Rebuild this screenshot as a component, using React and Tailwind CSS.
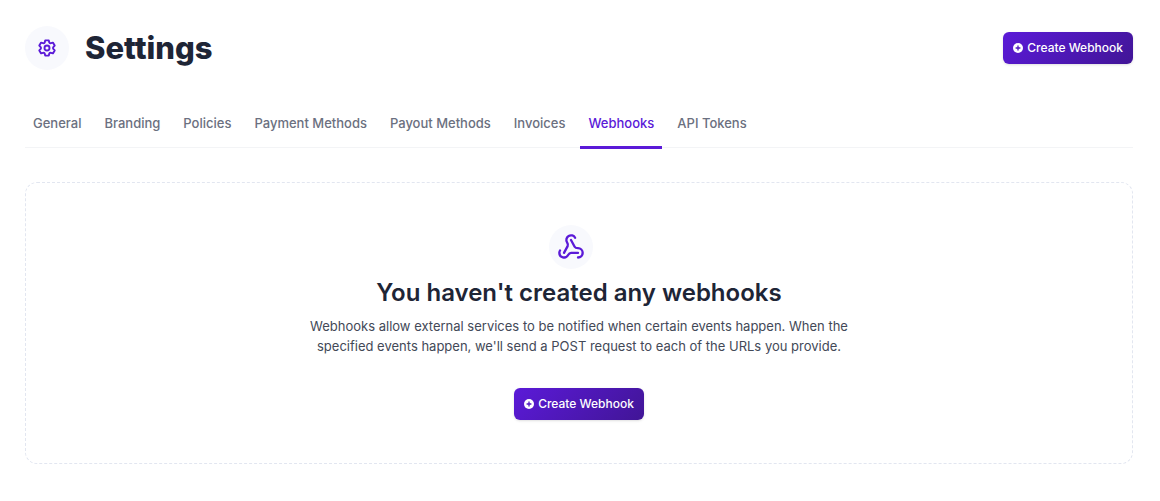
import { Webhook } from 'lucide-react';

const tabs = [
  'General',
  'Branding',
  'Policies',
  'Payment Methods',
  'Payout Methods',
  'Invoices',
  'Webhooks',
  'API Tokens',
];

function GearIcon() {
  return (
    <svg
      className="size-[18px]"
      viewBox="0 0 18 18"
      fill="none"
      stroke="#5b1ad8"
      strokeWidth="1.9"
      strokeLinejoin="round"
      aria-hidden="true"
    >
      <path d="M7.2 1.4H10.8L11.3 3.4Q11.9 4.4 13 4.1L14.9 3.6L16.7 6.6L15.3 8.1Q14.6 9 15.3 9.9L16.7 11.4L14.9 14.4L13 13.9Q11.9 13.6 11.3 14.6L10.8 16.6H7.2L6.7 14.6Q6.1 13.6 5 13.9L3.1 14.4L1.3 11.4L2.7 9.9Q3.4 9 2.7 8.1L1.3 6.6L3.1 3.6L5 4.1Q6.1 4.4 6.7 3.4Z" />
      <circle cx="9" cy="9" r="2.5" />
    </svg>
  );
}

function PlusIcon() {
  return (
    <svg className="size-[10px]" viewBox="0 0 10 10" aria-hidden="true">
      <circle cx="5" cy="5" r="5" fill="white" />
      <path d="M5 2.6v4.8M2.6 5h4.8" stroke="#5119c0" strokeWidth="1.3" />
    </svg>
  );
}

function CreateButton() {
  return (
    <button
      type="button"
      className="flex h-8 items-center gap-1 rounded-md bg-linear-[135deg] from-[#5b1ad8] to-[#411596] px-2.5 text-xs font-medium whitespace-nowrap text-white shadow-sm"
    >
      <PlusIcon />
      Create Webhook
    </button>
  );
}

export default function App() {
  return (
    <main className="bg-white pt-[26px] pr-[27px] pb-9 pl-[25px] font-['Inter',sans-serif]">
      <header className="flex items-center justify-between">
        <div className="flex items-center gap-4">
          <span className="flex size-11 items-center justify-center rounded-full bg-[#f8f9fd]">
            <GearIcon />
          </span>
          <h1 className="text-[31px] leading-10 font-extrabold text-[#1e2536]">Settings</h1>
        </div>
        <CreateButton />
      </header>

      <nav className="mt-[30px] flex gap-[7px] border-b border-[#f3f4f6]" aria-label="Settings">
        {tabs.map((tab) => (
          <a
            key={tab}
            href="#"
            aria-current={tab === 'Webhooks' ? 'page' : undefined}
            className={
              tab === 'Webhooks'
                ? '-mb-0.5 border-b-3 border-[#5b1ad8] px-2 py-[13px] text-[13px] leading-5 font-medium text-[#5b1ad8]'
                : 'px-2 py-[13px] text-[13px] leading-5 font-medium text-[#6b7080]'
            }
          >
            {tab}
          </a>
        ))}
      </nav>

      <section className="mt-[34px] flex flex-col items-center rounded-xl border border-dashed border-[#e2e6f0] px-6 pt-[42px] pb-[43px] text-center">
        <span className="mr-4 flex size-11 items-center justify-center rounded-full bg-[#f8f9fd]">
          <Webhook size={28} color="#5b1ad8" strokeWidth={2} />
        </span>
        <h2 className="mt-2 text-2xl leading-8 font-semibold text-[#1e2536]">
          You haven't created any webhooks
        </h2>
        <p className="mt-[7px] mb-8 max-w-[576px] text-[13px] leading-5 text-[#434957]">
          Webhooks allow external services to be notified when certain events happen. When the
          <br />
          specified events happen, we'll send a POST request to each of the URLs you provide.
        </p>
        <CreateButton />
      </section>
    </main>
  );
}
